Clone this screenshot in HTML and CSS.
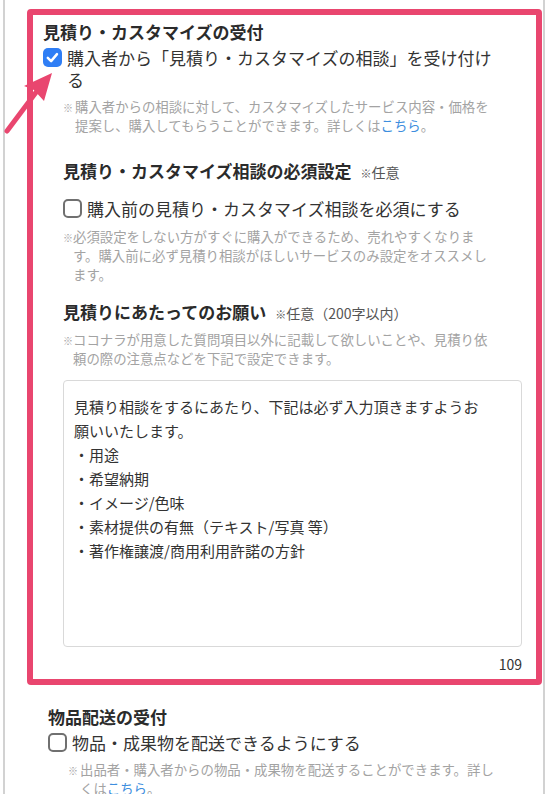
FILE: index.html
```html
<!DOCTYPE html>
<html lang="ja">
<head>
    <meta charset="UTF-8">
    <meta name="viewport" content="width=device-width, initial-scale=1.0">
    <title>見積り・カスタマイズの受付</title>
    <link rel="stylesheet" href="styles.css">
</head>
<body>

<div class="sheet">
    <svg class="arrow" width="80" height="150" viewBox="0 0 80 150">
        <line x1="7" y1="131" x2="37" y2="91" stroke="#e9466f" stroke-width="5" stroke-linecap="round"/>
        <polygon points="52,73 24,86 34,90 44,101" fill="#e9466f"/>
    </svg>

    <div class="page">
        <div class="highlight">
            <section class="option">
                <h3 class="option-title">見積り・カスタマイズの受付</h3>
                <label class="check">
                    <span class="box checked">
                        <svg width="19" height="19" viewBox="0 0 19 19"><path d="M4.8 9.9 L8.1 13.1 L14 6.1" fill="none" stroke="#fff" stroke-width="2.5" stroke-linecap="round" stroke-linejoin="round"/></svg>
                    </span>
                    <span class="check-text">購入者から「見積り・カスタマイズの相談」を受け付ける</span>
                </label>
                <p class="note"><span class="mark">※</span>購入者からの相談に対して、カスタマイズしたサービス内容・価格を<br>提案し、購入してもらうことができます。詳しくは<a href="#">こちら</a>。</p>
            </section>

            <div class="sub">
                <section class="sub-field">
                    <h4 class="sub-title">見積り・カスタマイズ相談の必須設定<span class="optional"><span class="mark-s">※</span>任意</span></h4>
                    <label class="check check-sub">
                        <span class="box"></span>
                        <span class="check-text">購入前の見積り・カスタマイズ相談を必須にする</span>
                    </label>
                    <p class="note note-sub"><span class="mark">※</span>必須設定をしない方がすぐに購入ができるため、売れやすくなりま<br>す。購入前に必ず見積り相談がほしいサービスのみ設定をオススメし<br>ます。</p>
                </section>

                <section class="sub-field field-request">
                    <h4 class="sub-title">見積りにあたってのお願い<span class="optional"><span class="mark-s">※</span>任意（200字以内）</span></h4>
                    <p class="note note-sub"><span class="mark">※</span>ココナラが用意した質問項目以外に記載して欲しいことや、見積り依<br>頼の際の注意点などを下記で設定できます。</p>
                    <textarea class="request" name="request">見積り相談をするにあたり、下記は必ず入力頂きますようお願いいたします。
・用途
・希望納期
・イメージ/色味
・素材提供の有無（テキスト/写真 等）
・著作権譲渡/商用利用許諾の方針</textarea>
                    <div class="count">109</div>
                </section>
            </div>
        </div>

        <section class="option option-outer">
            <h3 class="option-title">物品配送の受付</h3>
            <label class="check">
                <span class="box"></span>
                <span class="check-text">物品・成果物を配送できるようにする</span>
            </label>
            <p class="note"><span class="mark">※</span>出品者・購入者からの物品・成果物を配送することができます。詳し<br>くは<a href="#">こちら</a>。</p>
        </section>
    </div>
</div>

</body>
</html>
```

FILE: styles.css
```css
* {
    box-sizing: border-box;
}
body {
    margin: 0;
    font-family: "Noto Sans CJK JP", "Noto Sans", sans-serif;
    color: #333;
    background: #fff;
}
.sheet {
    position: relative;
}
.arrow {
    position: absolute;
    left: 0;
    top: 0;
    z-index: 2;
}
.page {
    margin-left: 3px;
    width: 542px;
    min-height: 794px;
    padding-top: 9px;
    border-left: 2px solid #d2d2d2;
    border-right: 2px solid #d2d2d2;
}
.highlight {
    margin: 0 1px 0 22px;
    padding: 6px 14px 6px 10px;
    border: 6px solid #e9466f;
    border-radius: 4px;
}
.option-title {
    margin: 0;
    font-size: 17px;
    line-height: 22px;
    font-weight: bold;
    color: #2b2b2b;
}
.check {
    display: flex;
    align-items: flex-start;
    gap: 5px;
    margin-top: 4px;
    padding-right: 20px;
    font-size: 17px;
    line-height: 22px;
    color: #333;
}
.box {
    flex: none;
    width: 19px;
    height: 19px;
    margin-top: 1px;
    border: 2px solid #707070;
    border-radius: 5px;
    background: #fff;
}
.box.checked {
    border: none;
    background: #2f7ef5;
}
.box svg {
    display: block;
}
.note {
    margin: 6px 0 0;
    padding-left: 32px;
    text-indent: -12px;
    font-size: 13.4px;
    line-height: 19px;
    color: #a3a3a3;
}
.note .mark {
    display: inline-block;
    width: 12px;
    line-height: 1;
    text-indent: 0;
    font-size: 10px;
}
.note a {
    color: #3e8ede;
    text-decoration: none;
}
.sub {
    margin-left: 20px;
}
.sub-field {
    margin-top: 25px;
}
.field-request {
    margin-top: 17px;
}
.sub-title {
    margin: 0;
    font-size: 17px;
    line-height: 22px;
    font-weight: bold;
    color: #2b2b2b;
}
.optional {
    margin-left: 9px;
    font-size: 14px;
    line-height: 1;
    font-weight: normal;
    color: #555;
}
.optional .mark-s {
    font-size: 11px;
}
.check-sub {
    margin-top: 16px;
}
.note-sub {
    margin-top: 7px;
    padding-left: 10px;
    text-indent: -10px;
}
.note-sub .mark {
    width: 10px;
}
.request {
    display: block;
    width: 100%;
    height: 267px;
    margin-top: 12px;
    padding: 14px 36px 10px 10px;
    border: 1px solid #d9d9d9;
    border-radius: 4px;
    font-family: inherit;
    font-size: 15px;
    line-height: 24px;
    color: #333;
    resize: none;
    outline: none;
}
.count {
    margin-top: 8px;
    text-align: right;
    font-size: 14px;
    line-height: 18px;
    color: #333;
}
.option-outer {
    margin: 21px 0 0 43px;
}
```
